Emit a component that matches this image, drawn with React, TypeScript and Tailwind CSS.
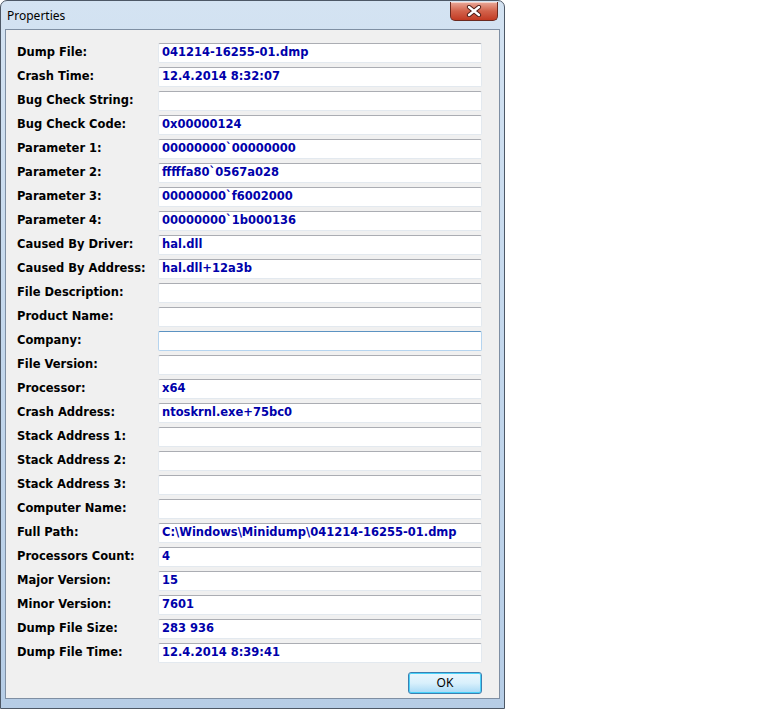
const rows: [string, string][] = [
  ["Dump File:", "041214-16255-01.dmp"],
  ["Crash Time:", "12.4.2014 8:32:07"],
  ["Bug Check String:", ""],
  ["Bug Check Code:", "0x00000124"],
  ["Parameter 1:", "00000000`00000000"],
  ["Parameter 2:", "fffffa80`0567a028"],
  ["Parameter 3:", "00000000`f6002000"],
  ["Parameter 4:", "00000000`1b000136"],
  ["Caused By Driver:", "hal.dll"],
  ["Caused By Address:", "hal.dll+12a3b"],
  ["File Description:", ""],
  ["Product Name:", ""],
  ["Company:", ""],
  ["File Version:", ""],
  ["Processor:", "x64"],
  ["Crash Address:", "ntoskrnl.exe+75bc0"],
  ["Stack Address 1:", ""],
  ["Stack Address 2:", ""],
  ["Stack Address 3:", ""],
  ["Computer Name:", ""],
  ["Full Path:", "C:\\Windows\\Minidump\\041214-16255-01.dmp"],
  ["Processors Count:", "4"],
  ["Major Version:", "15"],
  ["Minor Version:", "7601"],
  ["Dump File Size:", "283 936"],
  ["Dump File Time:", "12.4.2014 8:39:41"],
];

function CloseButton() {
  return (
    <div className="w-[48px] h-[19px] mt-[1px] rounded-b-[5px] border border-t-0 border-[#6b2a20] bg-gradient-to-b from-[#e9a99a] via-[#d2624b] to-[#c23a22] flex items-center justify-center shadow-[inset_0_1px_0_rgba(255,255,255,0.5)]">
      <svg width="16" height="12" viewBox="0 0 16 12">
        <path d="M3 2 L13 10 M13 2 L3 10" stroke="#4a1a14" strokeWidth="4.2" strokeLinecap="round" />
        <path d="M3 2 L13 10 M13 2 L3 10" stroke="#ffffff" strokeWidth="2.4" strokeLinecap="round" />
      </svg>
    </div>
  );
}

function Field({ label, value, focused }: { label: string; value: string; focused?: boolean }) {
  return (
    <div className="flex items-center h-[24px]">
      <div className="w-[141px] text-[11.5px] font-bold text-black">{label}</div>
      <div
        className={`w-[324px] h-[20px] bg-white border flex items-center pl-[3px] rounded-[2px] ${
          focused
            ? "border-[#b5d4ef] border-t-[#5c93c2]"
            : "border-[#e3e9ef] border-t-[#abadb3]"
        }`}
      >
        <span className="text-[11.5px] font-bold text-[#0000aa] whitespace-nowrap">{value}</span>
      </div>
    </div>
  );
}

export default function App() {
  return (
    <div className="w-[768px] h-[709px] bg-white overflow-hidden" style={{ fontFamily: "'DejaVu Sans', sans-serif" }}>
      <div className="w-[505px] h-[709px] flex flex-col rounded-t-[7px] border border-[#4d5866] bg-gradient-to-b from-[#d4e3f2] via-[#c3d7ec] to-[#b6cde6]">
        {/* title bar */}
        <div className="h-[28px] flex items-start justify-between pl-[6px] pr-[6px]">
          <span className="mt-[6px] text-[12px] text-black" style={{ fontFamily: "'Noto Sans', sans-serif" }}>
            Properties
          </span>
          <CloseButton />
        </div>
        {/* client area */}
        <div className="flex-1 mx-[4px] mb-[9px] border border-[#7f8fa3] bg-[#f0f0f0] pt-[11px] pl-[11px] pr-[12px]">
          <div className="flex flex-col">
            {rows.map(([label, value]) => (
              <Field key={label} label={label} value={value} focused={label === "Company:"} />
            ))}
          </div>
          <div className="flex justify-end pr-[5px] mt-[7px]">
            <button
              className="w-[74px] h-[22px] rounded-[3px] border border-[#3c7fb1] bg-gradient-to-b from-[#eaf6fd] via-[#d9f0fc] to-[#a7d9f5] text-[12px] text-black shadow-[inset_0_0_0_1px_#48d2fa]"
              style={{ fontFamily: "'Noto Sans', sans-serif" }}
            >
              OK
            </button>
          </div>
        </div>
      </div>
    </div>
  );
}
